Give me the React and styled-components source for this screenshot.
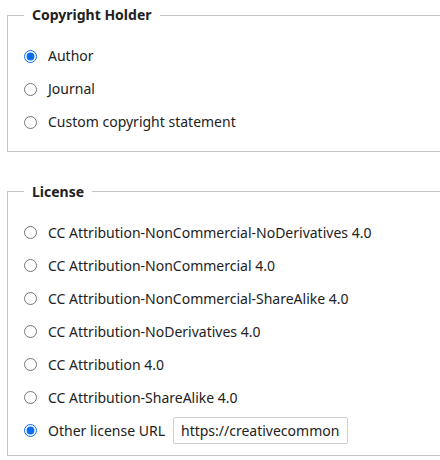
import React from "react";
import styled, { createGlobalStyle } from "styled-components";

const Global = createGlobalStyle`
  body {
    margin: 0;
    background: #fff;
    overflow: hidden;
    font-family: "Noto Sans", "Open Sans", sans-serif;
    font-size: 14px;
    color: #222;
  }
`;

const Page = styled.div`
  display: flex;
  flex-direction: column;
  gap: 30px;
  padding: 5px 0 0 7px;
  width: 480px;
`;

const Fieldset = styled.fieldset`
  margin: 0;
  border: 1px solid #c4c4c4;
  padding: 0 16px ${(p) => p.$bottom}px 16px;
  min-width: 0;
`;

const Legend = styled.legend`
  padding: 0 8px;
  font-weight: 700;
  font-size: 14px;
  line-height: 20px;
  color: #222;
`;

const List = styled.div`
  display: flex;
  flex-direction: column;
  padding-top: 14.5px;
`;

const Row = styled.label`
  display: flex;
  align-items: center;
  height: 33px;
  gap: 11px;
  line-height: 20px;
  white-space: nowrap;
`;

const Radio = styled.input.attrs({ type: "radio" })`
  margin: 0;
  width: 13px;
  height: 13px;
  flex: none;
  accent-color: #0a6cf0;
`;

const UrlInput = styled.input`
  margin-left: -3px;
  width: 175px;
  height: 27px;
  box-sizing: border-box;
  border: 1px solid #cfcfcf;
  border-radius: 2px;
  padding: 0 7px;
  font-family: "Noto Sans", "Open Sans", sans-serif;
  font-size: 14px;
  color: #222;
  outline: none;
`;

const holders = ["Author", "Journal", "Custom copyright statement"];
const licenses = [
  "CC Attribution-NonCommercial-NoDerivatives 4.0",
  "CC Attribution-NonCommercial 4.0",
  "CC Attribution-NonCommercial-ShareAlike 4.0",
  "CC Attribution-NoDerivatives 4.0",
  "CC Attribution 4.0",
  "CC Attribution-ShareAlike 4.0",
];

export default function App() {
  return (
    <>
      <Global />
      <Page>
        <Fieldset $bottom={12}>
          <Legend>Copyright Holder</Legend>
          <List>
            {holders.map((h, i) => (
              <Row key={h}>
                <Radio name="holder" defaultChecked={i === 0} />
                {h}
              </Row>
            ))}
          </List>
        </Fieldset>
        <Fieldset $bottom={8}>
          <Legend>License</Legend>
          <List>
            {licenses.map((l) => (
              <Row key={l}>
                <Radio name="license" />
                {l}
              </Row>
            ))}
            <Row>
              <Radio name="license" defaultChecked />
              Other license URL
              <UrlInput defaultValue="https://creativecommons.org/licenses/by/4.0/" />
            </Row>
          </List>
        </Fieldset>
      </Page>
    </>
  );
}
